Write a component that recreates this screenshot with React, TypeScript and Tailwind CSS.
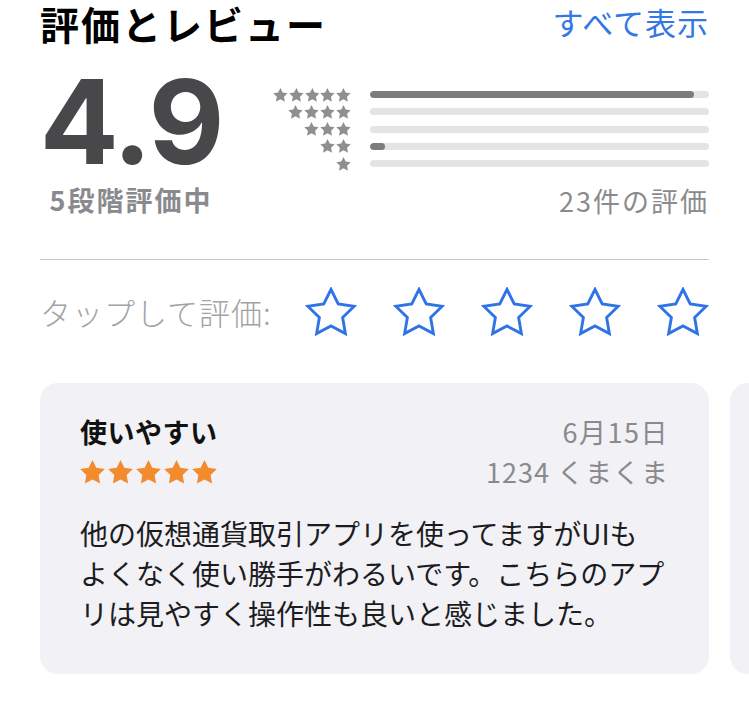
import React from "react";

const JP = { fontFamily: '"Noto Sans CJK JP", "Noto Sans", sans-serif' };

const HIST = [
  { stars: 5, pct: 95.7 },
  { stars: 4, pct: 0 },
  { stars: 3, pct: 0 },
  { stars: 2, pct: 4.3 },
  { stars: 1, pct: 0 },
];

const STAR = "12,2 15.09,8.26 22,9.27 17,14.14 18.18,21.02 12,17.77 5.82,21.02 7,14.14 2,9.27 8.91,8.26";

function SolidStar({ className }: { className: string }) {
  return (
    <svg viewBox="2 2 20 19.5" className={className}>
      <polygon points={STAR} fill="currentColor" strokeLinejoin="round" />
    </svg>
  );
}

function OutlineStar() {
  return (
    <svg viewBox="1 1 22 21.5" className="h-[50px] w-[52px] text-[#2f74e6]">
      <polygon
        points={STAR}
        fill="none"
        stroke="currentColor"
        strokeWidth={1.25}
        strokeLinejoin="miter"
      />
    </svg>
  );
}

export default function App() {
  return (
    <div className="relative h-[706px] w-[749px] overflow-hidden bg-white px-10 pt-[2px]" style={JP}>
      {/* header */}
      <div className="flex items-end justify-between">
        <h2 className="text-[39px] font-bold leading-[40px] tracking-[2px] text-black">評価とレビュー</h2>
        <a className="pb-[1px] text-[31px] leading-[40px] tracking-[1px] text-[#3478e5]">すべて表示</a>
      </div>

      {/* summary */}
      <div className="mt-[24px] flex items-start">
        <div className="flex w-[182px] flex-col items-center">
          <div
            className="text-[117px] font-bold leading-[110px] tracking-[-2px] text-[#48484a]"
            style={{ fontFamily: "Inter, sans-serif" }}
          >
            4.9
          </div>
          <div className="mt-[8px] text-[27px] font-bold leading-[30px] tracking-[2px] text-[#8a8a8e]">
            5段階評価中
          </div>
        </div>

        <div className="ml-auto flex w-[436px] flex-col pt-[19px]">
          {HIST.map((row) => (
            <div key={row.stars} className="flex h-[17.25px] items-center">
              <div className="flex w-[78px] justify-end gap-[1px]">
                {Array.from({ length: row.stars }).map((_, i) => (
                  <SolidStar key={i} className="h-[14px] w-[15px] text-[#8e8e93]" />
                ))}
              </div>
              <div className="ml-[19px] h-[7px] flex-1 overflow-hidden rounded-full bg-[#e4e4e6]">
                <div className="h-full rounded-full bg-[#7c7c80]" style={{ width: `${row.pct}%` }} />
              </div>
            </div>
          ))}
          <div className="mt-[14px] text-right text-[27px] leading-[30px] tracking-[2px] text-[#8a8a8e]">
            23件の評価
          </div>
        </div>
      </div>

      <div className="mt-[43px] h-px bg-[#c8c8cb]" />

      {/* tap to rate */}
      <div className="mt-[27px] flex items-center">
        <span className="text-[31px] font-light leading-[40px] tracking-[1px] text-[#a3a3a6]">タップして評価:</span>
        <div className="ml-auto flex w-[404px] justify-between">
          {[0, 1, 2, 3, 4].map((i) => (
            <OutlineStar key={i} />
          ))}
        </div>
      </div>

      {/* reviews */}
      <div className="mt-[46px] flex gap-[21px]">
        <div className="h-[291px] w-[669px] shrink-0 rounded-[18px] bg-[#f1f1f6] px-10 pt-[31px]">
          <div className="flex items-baseline justify-between">
            <span className="text-[27px] font-bold leading-[36px] tracking-[0.5px] text-[#111]">使いやすい</span>
            <span className="text-[27px] leading-[36px] tracking-[1.5px] text-[#8a8a8e]">6月15日</span>
          </div>
          <div className="mt-[5px] flex items-center justify-between">
            <div className="flex gap-[3px]">
              {[0, 1, 2, 3, 4].map((i) => (
                <SolidStar key={i} className="h-[24px] w-[25px] text-[#f28b2e]" />
              ))}
            </div>
            <span className="text-[27px] leading-[34px] tracking-[1px] text-[#8a8a8e]">1234 くまくま</span>
          </div>
          <p className="mt-[24px] whitespace-nowrap text-[28px] leading-[40px] text-[#1c1c1e]">
            他の仮想通貨取引アプリを使ってますがUIも
            <br />
            よくなく使い勝手がわるいです。こちらのアプ
            <br />
            リは見やすく操作性も良いと感じました。
          </p>
        </div>
        <div className="h-[291px] w-[669px] shrink-0 rounded-[18px] bg-[#f1f1f6]" />
      </div>
    </div>
  );
}
